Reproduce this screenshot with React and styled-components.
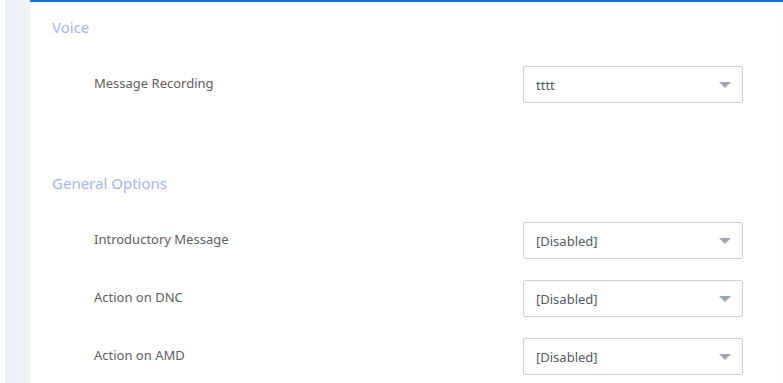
import React from "react";
import styled, { createGlobalStyle } from "styled-components";

const GlobalStyle = createGlobalStyle`
  html, body {
    margin: 0;
    padding: 0;
    background: #ffffff;
  }
  body {
    font-family: "Noto Sans", "Open Sans", sans-serif;
    -webkit-font-smoothing: antialiased;
  }
`;

const Page = styled.div`
  display: flex;
  height: 383px;
  overflow: hidden;
  padding-left: 5px;
  background: #ffffff;
`;

const SideRail = styled.div`
  width: 25px;
  flex-shrink: 0;
  background: linear-gradient(to right, #e9eef2, #f1f4f7);
`;

const Main = styled.main`
  flex: 1;
  border-top: 2px solid #1a73d4;
  box-shadow: inset 0 4px 4px -3px rgba(0, 0, 0, 0.08);
  padding: 15px 40px 0 22px;
`;

const Section = styled.section`
  margin-bottom: 70px;
`;

const SectionTitle = styled.h3`
  margin: 0 0 29px;
  font-size: 15px;
  line-height: 20px;
  font-weight: 400;
  color: #a4b3f1;
`;

const Rows = styled.div`
  display: flex;
  flex-direction: column;
  gap: 21px;
  padding-left: 42px;
`;

const Row = styled.div`
  display: flex;
  align-items: center;
  justify-content: space-between;
`;

const Label = styled.label`
  font-size: 13px;
  line-height: 18px;
  margin-bottom: 3px;
  color: #606060;
`;

const SelectBox = styled.div`
  position: relative;
  box-sizing: border-box;
  width: 220px;
  height: 37px;
  border: 1px solid #cdd1d6;
  border-radius: 2px;
  display: flex;
  align-items: center;
  padding: 0 12px;
  font-size: 13px;
  color: #555a60;
`;

const Caret = styled.span`
  position: absolute;
  right: 11px;
  top: 50%;
  margin-top: -3px;
  width: 0;
  height: 0;
  border-left: 6px solid transparent;
  border-right: 6px solid transparent;
  border-top: 6px solid #a0a6ad;
`;

const Select = ({ value }) => (
  <SelectBox>
    {value}
    <Caret />
  </SelectBox>
);

const sections = [
  {
    title: "Voice",
    rows: [{ label: "Message Recording", value: "tttt" }],
  },
  {
    title: "General Options",
    rows: [
      { label: "Introductory Message", value: "[Disabled]" },
      { label: "Action on DNC", value: "[Disabled]" },
      { label: "Action on AMD", value: "[Disabled]" },
    ],
  },
];

export default function App() {
  return (
    <>
      <GlobalStyle />
      <Page>
        <SideRail />
        <Main>
          {sections.map((s) => (
            <Section key={s.title}>
              <SectionTitle>{s.title}</SectionTitle>
              <Rows>
                {s.rows.map((r) => (
                  <Row key={r.label}>
                    <Label>{r.label}</Label>
                    <Select value={r.value} />
                  </Row>
                ))}
              </Rows>
            </Section>
          ))}
        </Main>
      </Page>
    </>
  );
}
